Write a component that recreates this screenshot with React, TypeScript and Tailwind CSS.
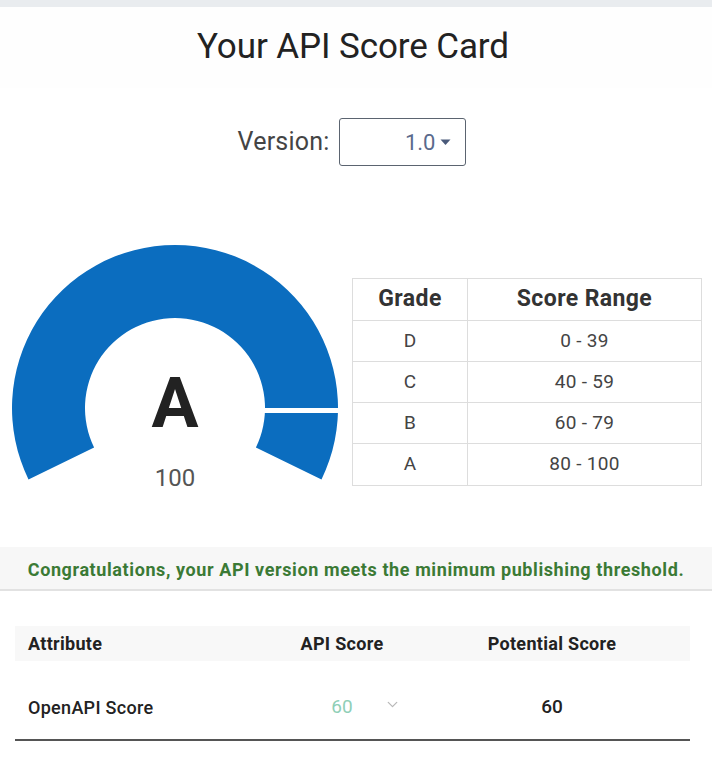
import { ChevronDown } from "lucide-react";

const grades = [
  { grade: "D", range: "0 - 39" },
  { grade: "C", range: "40 - 59" },
  { grade: "B", range: "60 - 79" },
  { grade: "A", range: "80 - 100" },
];

const attributes = [
  { name: "OpenAPI Score", score: 60, potential: 60 },
  { name: "Description", score: 10, potential: 10 },
];

function Gauge() {
  // annular sector from 206deg over the top to -26deg
  const cx = 175;
  const cy = 168;
  const path =
    "M 28.5 239.4 A 163 163 0 1 1 321.5 239.4 L 255.9 207.5 A 90 90 0 1 0 94.1 207.5 Z";
  return (
    <div className="relative w-[350px] h-[250px] shrink-0">
      <svg width="350" height="250" viewBox="0 0 350 250">
        <path d={path} fill="#0b6dbf" />
        <rect x={cx + 80} y={cy + 0} width="100" height="5" fill="#ffffff" />
      </svg>
      <div className="absolute left-0 right-0 top-[128px] text-center text-[70px] leading-none font-bold text-[#222]">
        A
      </div>
      <div className="absolute left-0 right-0 top-[226px] text-center text-[24px] leading-none text-[#555]">
        100
      </div>
    </div>
  );
}

export default function App() {
  return (
    <div
      className="h-[768px] w-[712px] overflow-hidden bg-white"
      style={{ fontFamily: "Roboto, 'Liberation Sans', sans-serif" }}
    >
      <div className="h-[7px] bg-[#e9ecef]" />
      <div className="h-[81px] flex items-center justify-center bg-[#fefefe]">
        <h1 className="text-[35px] text-[#222] tracking-[-0.1px] pr-[6px]">Your API Score Card</h1>
      </div>

      <div className="mt-[30px] flex items-center justify-center gap-[10px] pr-[8px]">
        <span className="text-[25px] text-[#444] tracking-[0.2px]">Version:</span>
        <div className="h-[48px] w-[127px] rounded-[3px] border-[1.5px] border-[#5b6470] flex items-center justify-end pr-[14px] gap-[5px]">
          <span className="text-[22px] text-[#5a6a8c]">1.0</span>
          <svg width="11" height="7" viewBox="0 0 11 7">
            <path d="M0.5 0.5 L10.5 0.5 L5.5 6 Z" fill="#4a5a7a" />
          </svg>
        </div>
      </div>

      <div className="mt-[74px] flex items-start">
        <Gauge />
        <div className="mt-[38px] ml-[2px] w-[350px] border border-[#ddd]">
          <div className="grid grid-cols-[115px_1fr] h-[42px] border-b border-[#ddd]">
            <div className="flex items-center justify-center border-r border-[#ddd] text-[23px] font-bold text-[#333] tracking-[0.4px]">
              Grade
            </div>
            <div className="flex items-center justify-center text-[23px] font-bold text-[#333] tracking-[0.4px]">
              Score Range
            </div>
          </div>
          {grades.map((g, i) => (
            <div
              key={g.grade}
              className={`grid grid-cols-[115px_1fr] h-[41px] ${i < grades.length - 1 ? "border-b border-[#ddd]" : ""}`}
            >
              <div className="flex items-center justify-center border-r border-[#ddd] text-[19px] text-[#444]">
                {g.grade}
              </div>
              <div className="flex items-center justify-center text-[19px] text-[#444] tracking-[0.3px]">
                {g.range}
              </div>
            </div>
          ))}
        </div>
      </div>

      <div className="mt-[57px] h-[44px] bg-[#f7f7f7] border-b-2 border-[#e2e2e2] flex items-center justify-center pt-[3px]">
        <p className="text-[18px] font-bold text-[#3b7a35] tracking-[0.6px]">
          Congratulations, your API version meets the minimum publishing threshold.
        </p>
      </div>

      <div className="mt-[35px] mx-[15px] w-[675px]">
        <div className="grid grid-cols-[255px_144px_1fr] h-[35px] items-center bg-[#f8f8f8] text-[18px] font-bold text-[#222] tracking-[0.3px]">
          <span className="pl-[13px]">Attribute</span>
          <span className="text-center">API Score</span>
          <span className="text-center">Potential Score</span>
        </div>
        {attributes.map((a, i) => (
          <div
            key={a.name}
            className={`grid grid-cols-[255px_144px_1fr] items-center h-[80px] pt-[14px] ${i === 0 ? "border-b-2 border-[#555]" : ""}`}
          >
            <span className="pl-[13px] text-[18px] font-medium text-[#222] tracking-[0.3px]">{a.name}</span>
            <span className="flex justify-center">
              <span className="relative text-[19px] text-[#8fcfb7]">
                {a.score}
                {i === 0 && (
                  <ChevronDown
                    className="absolute left-[53px] top-[3px] text-[#b8b8b8]"
                    size={17}
                    strokeWidth={1.75}
                  />
                )}
              </span>
            </span>
            <span className="text-center text-[19px] font-medium text-[#222]">{a.potential}</span>
          </div>
        ))}
      </div>
    </div>
  );
}
